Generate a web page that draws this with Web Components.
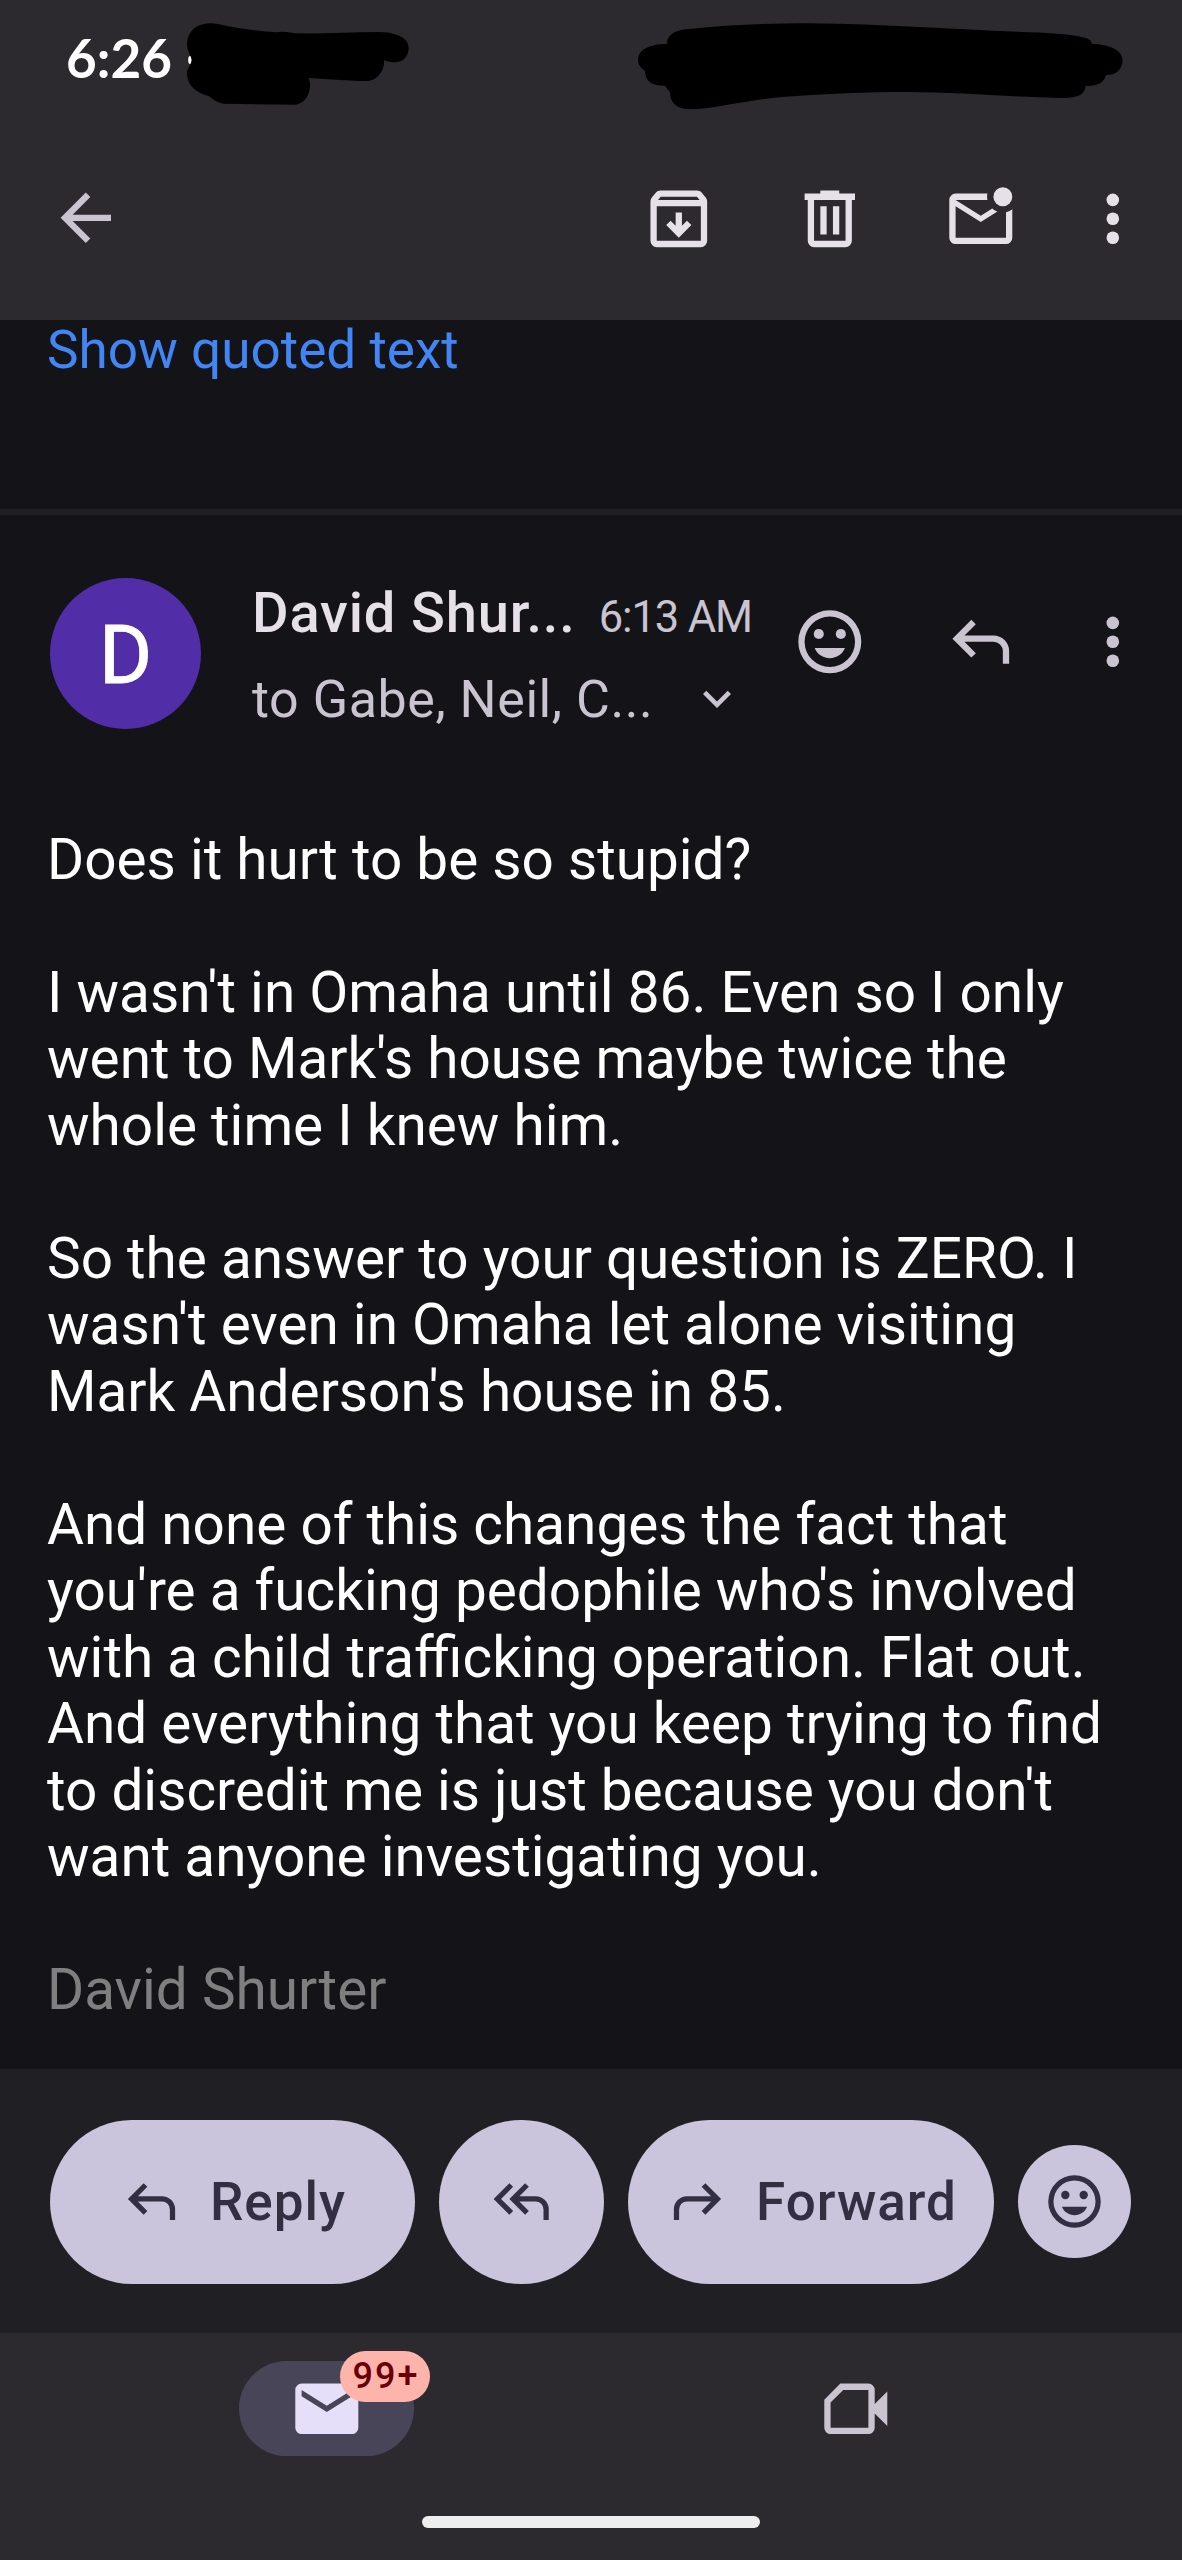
<!DOCTYPE html>
<html lang="en">
<head>
<meta charset="utf-8">
<title>Mail</title>
<style>
html,body{margin:0;padding:0;background:#141318}
body{font-family:Roboto,"Liberation Sans",sans-serif}
</style>
</head>
<body>
<mail-app></mail-app>
<script>
const ICONS = {
  back: '<path d="M7.825 13l5.6 5.6L12 20l-8-8 8-8 1.425 1.4-5.6 5.6H20v2z"/>',
  archive: '<path d="M12 18l4-4-1.4-1.4-1.6 1.6V10h-2v4.2l-1.6-1.6L8 14zM5 8v11h14V8zm0 13q-.825 0-1.413-.587T3 19V6.525q0-.35.113-.675t.337-.6L4.7 3.725q.275-.35.688-.538T6.25 3h11.5q.45 0 .863.188t.687.537l1.25 1.525q.225.275.337.6t.113.675V19q0 .825-.587 1.413T19 21zm.4-15h13.2l-.85-1H6.25z"/>',
  trash: '<path d="M7 21q-.825 0-1.413-.587T5 19V6H4V4h5V3h6v1h5v2h-1v13q0 .825-.587 1.413T17 21zM17 6H7v13h10zM9 17h2V8H9zm4 0h2V8h-2z"/>',
  unread: '<path d="M4 20q-.825 0-1.413-.587T2 18V6q0-.825.588-1.413T4 4h10.1q-.1.5-.1 1t.1 1H4l8 5 3.65-2.275q.35.325.763.563t.862.412L12 13 4 8v10h16V9.9q.575-.125 1.075-.35T22 9v9q0 .825-.587 1.413T20 20z"/><circle cx="19" cy="5" r="3"/>',
  more: '<circle cx="12" cy="6" r="2"/><circle cx="12" cy="12" r="2"/><circle cx="12" cy="18" r="2"/>',
  smile: '<path fill-rule="evenodd" d="M12 2a10 10 0 1 0 0 20 10 10 0 0 0 0-20zm0 2a8 8 0 1 1 0 16 8 8 0 0 1 0-16z"/><circle cx="8.5" cy="9.5" r="1.6"/><circle cx="15.5" cy="9.5" r="1.6"/><path d="M7.2 14h9.6c-.8 1.95-2.55 3.2-4.8 3.2S8 15.95 7.2 14z"/>',
  reply: '<path d="M19 19v-4q0-1.25-.875-2.125T16 12H6.825l3.6 3.6L9 17l-6-6 6-6 1.425 1.4-3.6 3.6H16q2.075 0 3.538 1.463T21 15v4z"/>',
  replyall: '<path d="M7 17l-6-6 6-6 1.425 1.4L3.825 11l4.6 4.6zM20 19v-4q0-1.25-.875-2.125T17 12h-6.175l3.6 3.6L13 17l-6-6 6-6 1.425 1.4-3.6 3.6H17q2.075 0 3.538 1.463T22 15v4z"/>',
  forward: '<path d="M5 19v-4q0-1.25.875-2.125T8 12h9.175l-3.6 3.6L15 17l6-6-6-6-1.425 1.4 3.6 3.6H8q-2.075 0-3.537 1.463T3 15v4z"/>',
  chevron: '<path d="M12 15.4l-6-6L7.4 8l4.6 4.6L16.6 8 18 9.4z"/>',
  mail: '<path fill-rule="evenodd" d="M4 20q-.825 0-1.413-.587T2 18V6q0-.825.588-1.413T4 4h16q.825 0 1.413.588T22 6v12q0 .825-.587 1.413T20 20zM12 13l8-5V6l-8 5-8-5v2z"/>',
  video: '<path fill-rule="evenodd" d="M7.1 4H16q.825 0 1.413.588T18 6v4.5l4-4v11l-4-4V18q0 .825-.587 1.413T16 20H4q-.825 0-1.413-.587T2 18V9.1zM8 6L4 10v8h12V6z"/>'
};
const define = (tag, html) => customElements.define(tag, class extends HTMLElement {
  constructor() {
    super();
    const t = document.createElement('template');
    t.innerHTML = html;
    this.attachShadow({mode: 'open'}).append(t.content.cloneNode(true));
  }
});

customElements.define('mail-icon', class extends HTMLElement {
  constructor() { super(); this.attachShadow({mode: 'open'}); }
  connectedCallback() {
    this.shadowRoot.innerHTML = `<style>:host{display:block;flex:none;width:var(--icon-size,75.6px);height:var(--icon-size,75.6px)}svg{display:block;width:100%;height:100%;fill:currentColor}</style><svg viewBox="0 0 24 24" aria-hidden="true">${ICONS[this.getAttribute('name')]}</svg>`;
  }
});

define('status-bar', `<style>
:host{display:flex;height:119px;align-items:flex-start;box-sizing:border-box;padding:23px 59px 0 66px}
span{font:700 53px/66px Lato,sans-serif;color:#fff;letter-spacing:0;width:121px;white-space:nowrap;margin-top:2px}
svg{display:block;flex:none}
.r{margin-left:auto}
</style>
<span>6:26</span>
<svg width="222" height="84" viewBox="187 23 222 84"><ellipse cx="190" cy="60" rx="1.800" ry="4" fill="#fff"/><path d="M187 43C188 29 200 21 218 24C240 29 258 31 277 32.300C283 31 289 32 295 33.300C323 34 350 32 377 32C397 32 409 38 408.700 48.500C408 59 400 66 384 60.300C385 70 377 81 367 81C350 81 330 79 308.800 78C313 90 306 105 294 104.700L224 103.700C217 103 213 99 208.600 96C196 93 187 85 187 73.500C187 68 191 66 191.700 60C191 55 187 52 187 43Z"/></svg>
<svg class="r" width="485" height="87" viewBox="638 24 485 87"><path d="M638 61C638 51 649 45 667 45C667 37 673 31 689 30C728 26 770 24.300 808 24.300C895 25 970 32 1040 33.500C1060 35 1075 36 1081 38C1088 39 1091 41 1092 45C1110 45 1123 52 1122.600 61.700C1122 70 1117 76 1106 76C1104 83 1099 87 1085.500 87C1085 95 1079 99 1062 99C1010 98 960 93 908 93C865 93 825 95 786 97.700C750 100 715 110 689 110.300C677 110 670 104 670 93.300C668 91 667 89 665 86.700C652 87 645 82 645 71.700C641 69 638 66 638 61Z"/></svg>`);

define('top-bar', `<style>
:host{display:flex;height:201px;align-items:center;box-sizing:border-box;color:#e6e0e9;padding:0 31px 1px 48px}
.back{color:#cac4d0;margin-right:auto;margin-top:-3px}
.acts{display:flex;gap:75.400px}
.more{margin-left:56.400px}
</style>
<mail-icon class="back" name="back"></mail-icon>
<div class="acts"><mail-icon name="archive"></mail-icon><mail-icon name="trash"></mail-icon><mail-icon name="unread"></mail-icon></div>
<mail-icon class="more" name="more"></mail-icon>`);

define('quoted-toggle', `<style>
:host{display:block;height:189px;border-bottom:6px solid #201f24;padding:0 47px;font-size:53.100px;line-height:60px;color:#4285f4}
</style><slot></slot>`);

define('message-head', `<style>
:host{display:flex;height:279px;padding:0 31px 0 50px;box-sizing:border-box;color:#cac4d0}
.av{flex:none;box-sizing:border-box;width:151px;height:151px;padding-top:4px;border-radius:50%;margin-top:63px;background:#512da8;color:#fff;display:flex;align-items:center;justify-content:center;font-size:81px;font-weight:400;-webkit-text-stroke:1px #fff;line-height:1}
.who{margin:62px 0 0 51px;width:500px;display:flex;flex-direction:column;white-space:nowrap}
.l1{display:flex;align-items:baseline;justify-content:space-between;height:72px;line-height:72px}
.name{font-size:56px;font-weight:500;color:#e6e0e9;letter-spacing:.85px}
.time{font-size:43.500px;line-height:72px;letter-spacing:-1.100px}
.l2{display:flex;align-items:center;height:102px;line-height:102px;font-size:52px;letter-spacing:.55px}
.l2 mail-icon{--icon-size:56px;margin-left:36px}
.acts{display:flex;margin:88.500px 0 0 auto;gap:75.400px}
.more{margin:88.500px 0 0 56.400px}
</style>
<div class="av">D</div>
<div class="who">
<div class="l1"><span class="name"><slot name="name"></slot></span><span class="time"><slot name="time"></slot></span></div>
<div class="l2"><span class="to"><slot name="to"></slot></span><mail-icon name="chevron"></mail-icon></div>
</div>
<div class="acts"><mail-icon name="smile"></mail-icon><mail-icon name="reply"></mail-icon></div>
<mail-icon class="more" name="more"></mail-icon>`);

define('message-body', `<style>
:host{display:block;height:1275px;box-sizing:border-box;padding:33px 0 0 47px;font-size:56.700px;line-height:66.470px;color:#fff;white-space:nowrap}
p{margin:0 0 66.470px}
.sig{color:#7f7f7f;margin:0}
</style>
<p>Does it hurt to be so stupid?</p>
<p>I wasn't in Omaha until 86. Even so I only<br>went to Mark's house maybe twice the<br>whole time I knew him.</p>
<p>So the answer to your question is ZERO. I<br>wasn't even in Omaha let alone visiting<br>Mark Anderson's house in 85.</p>
<p>And none of this changes the fact that<br>you're a fucking pedophile who's involved<br>with a child trafficking operation. Flat out.<br>And everything that you keep trying to find<br>to discredit me is just because you don't<br>want anyone investigating you.</p>
<p class="sig">David Shurter</p>`);

define('pill-button', `<style>
:host{display:flex;flex:none;box-sizing:border-box;align-items:center;height:164px;border-radius:82px;background:#cac4dc;color:#322f42;font-size:53px;font-weight:500;letter-spacing:1px;white-space:nowrap;--icon-size:63px}
</style><slot></slot>`);

define('action-bar', `<style>
:host{display:flex;align-items:center;box-sizing:border-box;height:264px;background:#201f24;padding:1px 50px 0;gap:24px}
.a{width:365px;padding-left:70px}
.a span{margin-left:27px}
.b{width:165px;padding-left:52px}
.c{width:366px;padding-left:37.500px}
.c span{margin-left:27.500px}
.d{width:113.400px;height:113.400px;padding-left:25.200px}
</style>
<pill-button class="a"><mail-icon name="reply"></mail-icon><span>Reply</span></pill-button>
<pill-button class="b"><mail-icon name="replyall"></mail-icon></pill-button>
<pill-button class="c"><mail-icon name="forward"></mail-icon><span>Forward</span></pill-button>
<pill-button class="d"><mail-icon name="smile"></mail-icon></pill-button>`);

define('nav-bar', `<style>
:host{display:flex;flex-direction:column;height:227px;background:#2c292f;align-items:center}
.tabs{display:flex;width:100%;height:183px;align-items:flex-start;padding-top:28px;box-sizing:border-box}
.tab{flex:1;display:flex;justify-content:center}
.pill{position:relative;display:flex;align-items:center;justify-content:center;width:175px;height:95px;border-radius:48px;color:#cac4d0}
.on{background:#494559;color:#e6dff9}
.tab:first-child{padding-left:62px}
.tab:last-child{padding-right:62px}
.badge{position:absolute;left:101px;top:-10px;width:90px;height:51px;border-radius:26px;background:#ffb4ab;color:#690005;font-size:36px;font-weight:500;line-height:51px;text-align:center;letter-spacing:2px;text-indent:2px}
.home{width:338px;height:12px;border-radius:6px;background:#eee}
</style>
<div class="tabs">
<div class="tab"><div class="pill on"><mail-icon name="mail"></mail-icon><div class="badge">99+</div></div></div>
<div class="tab"><div class="pill"><mail-icon name="video"></mail-icon></div></div>
</div>
<div class="home"></div>`);

define('mail-app', `<style>
:host{display:flex;flex-direction:column;width:1182px;height:2560px;overflow:hidden;background:#141318}
header,quoted-toggle,message-head,message-body,action-bar,nav-bar{flex:none}
header{background:#2c292f;height:320px}
</style>
<header><status-bar></status-bar><top-bar></top-bar></header>
<quoted-toggle>Show quoted text</quoted-toggle>
<message-head><span slot="name">David Shur...</span><span slot="time">6:13 AM</span><span slot="to">to Gabe, Neil, C...</span></message-head>
<message-body></message-body>
<action-bar></action-bar>
<nav-bar></nav-bar>`);
</script>
</body>
</html>
